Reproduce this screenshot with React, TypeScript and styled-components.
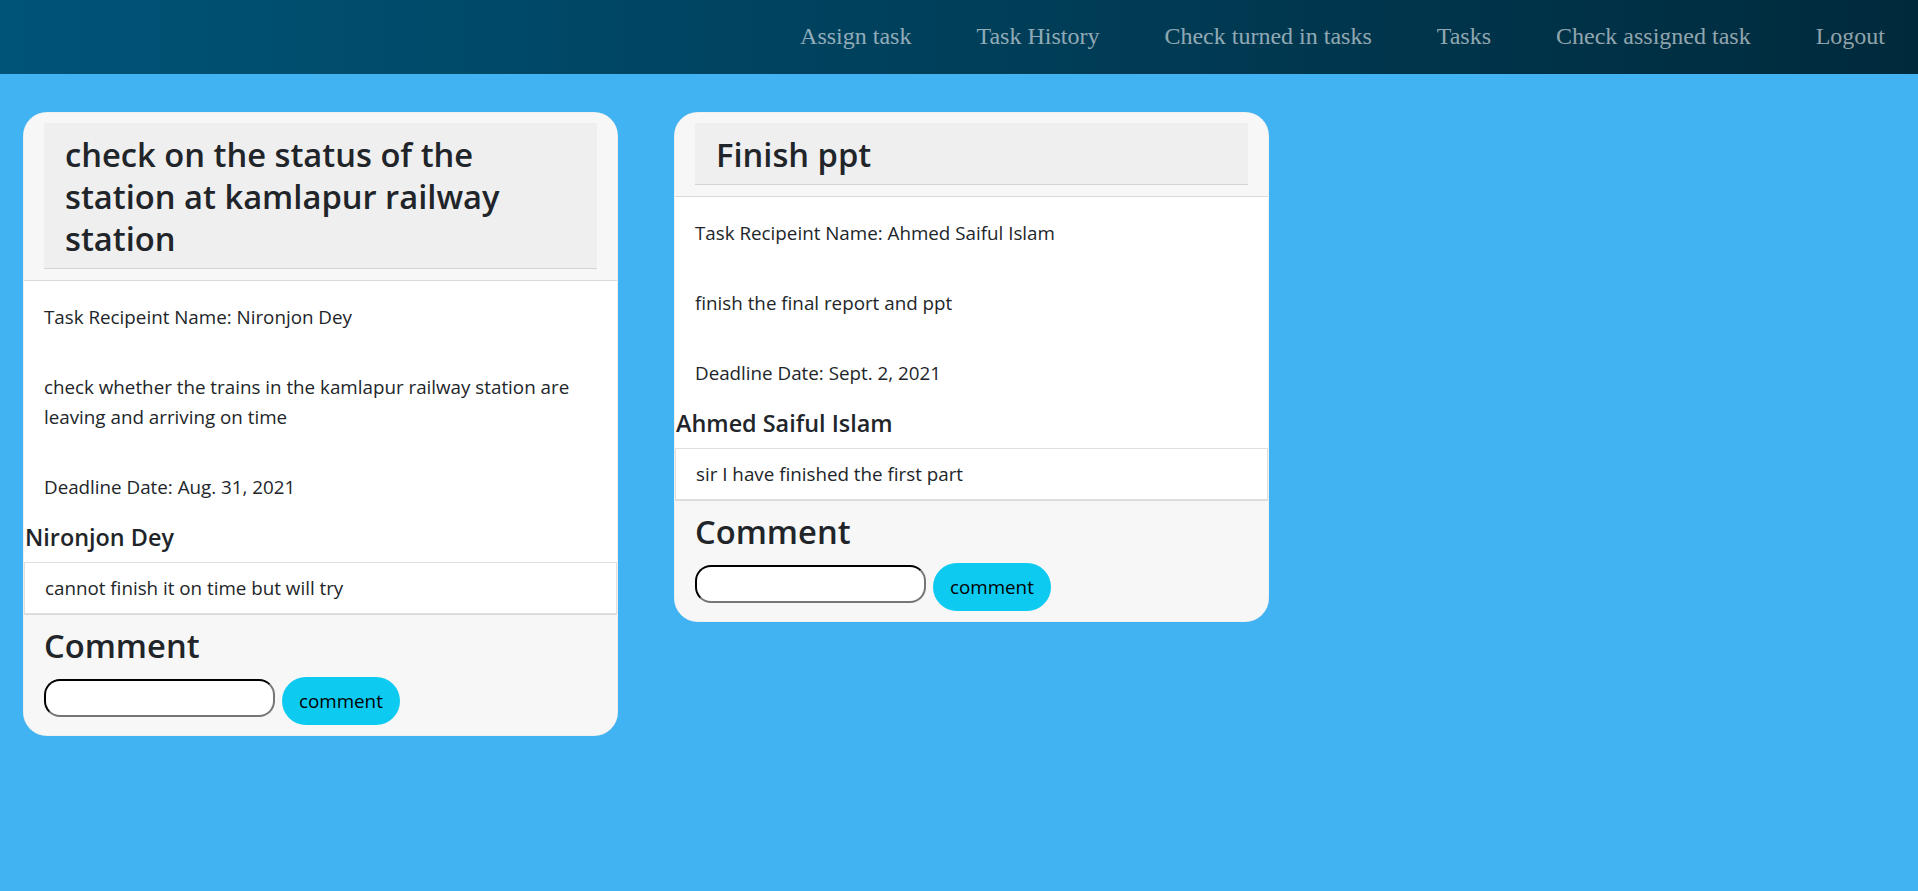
import React from 'react';
import styled, { createGlobalStyle } from 'styled-components';

const GlobalStyle = createGlobalStyle`
  html, body {
    margin: 0;
    padding: 0;
  }

  body {
    background-color: #42b3f2;
    font-family: 'Open Sans', 'Noto Sans', sans-serif;
    color: #212529;
    min-height: 891px;
  }

  * {
    box-sizing: border-box;
  }
`;

const Navbar = styled.nav`
  display: flex;
  justify-content: flex-end;
  align-items: center;
  gap: 65px;
  height: 74px;
  padding: 0 33px 2px 0;
  background: linear-gradient(to right, #005478, #002a3c);
`;

const NavLink = styled.a`
  font-family: 'Liberation Serif', 'Times New Roman', serif;
  font-size: 24px;
  line-height: 30px;
  color: rgba(255, 255, 255, 0.58);
  text-decoration: none;
  cursor: pointer;
`;

const Board = styled.main`
  display: flex;
  align-items: flex-start;
  gap: 56px;
  padding: 38px 23px;
`;

const Card = styled.section`
  width: 595px;
  background: #fff;
  border: 1px solid rgba(0, 0, 0, 0.06);
  border-radius: 24px;
  overflow: hidden;
`;

const CardHeader = styled.header`
  background: #f7f7f7;
  padding: 10px 20px 11px;
  border-bottom: 1px solid #dadada;
`;

const Title = styled.h1`
  margin: 0;
  padding: 11px 21px 8px;
  background: #efefef;
  border-bottom: 1px solid #d4d4d4;
  font-size: 32.7px;
  line-height: 42px;
  font-weight: 600;
`;

const CardBody = styled.div`
  display: flex;
  flex-direction: column;
  gap: 40px;
  padding: 21px 20px 20px;
`;

const Text = styled.p`
  margin: 0;
  font-size: 18.8px;
  line-height: 30px;
`;

const ReplyAuthor = styled.h5`
  margin: 0 0 10px;
  padding-left: 1px;
  font-size: 23.4px;
  line-height: 30px;
  font-weight: 600;
`;

const ReplyItem = styled.div`
  border: 1px solid #dfdfdf;
  padding: 10px 20px;
  font-size: 18.8px;
  line-height: 30px;
`;

const CardFooter = styled.footer`
  background: #f7f7f7;
  border-top: 1px solid #dadada;
  padding: 10px 20px;
`;

const FooterTitle = styled.h1`
  margin: 0 0 10px;
  font-size: 32.7px;
  line-height: 42px;
  font-weight: 600;
`;

const CommentForm = styled.form`
  display: flex;
  align-items: flex-start;
  gap: 7px;
`;

const CommentInput = styled.input`
  width: 231px;
  height: 38px;
  margin-top: 2px;
  border: 2px inset #767676;
  border-top-color: #1f1f1f;
  border-left-color: #1f1f1f;
  border-radius: 16px;
  background: #fff;
  padding: 0 12px;
  font-size: 18px;
`;

const CommentButton = styled.button`
  height: 48px;
  padding: 0 17px;
  border: none;
  border-radius: 24px;
  background: #0dcaf0;
  color: #000;
  font-family: 'Open Sans', 'Noto Sans', sans-serif;
  font-size: 18.8px;
  line-height: 30px;
  cursor: pointer;
`;

interface ITask {
  title: string;
  recipient: string;
  description: string;
  deadline: string;
  reply: string;
}

const tasks: ITask[] = [
  {
    title: 'check on the status of the station at kamlapur railway station',
    recipient: 'Nironjon Dey',
    description: 'check whether the trains in the kamlapur railway station are leaving and arriving on time',
    deadline: 'Aug. 31, 2021',
    reply: 'cannot finish it on time but will try',
  },
  {
    title: 'Finish ppt',
    recipient: 'Ahmed Saiful Islam',
    description: 'finish the final report and ppt',
    deadline: 'Sept. 2, 2021',
    reply: 'sir I have finished the first part',
  },
];

const navItems = [
  'Assign task',
  'Task History',
  'Check turned in tasks',
  'Tasks',
  'Check assigned task',
  'Logout',
];

const TaskCard: React.FC<{ task: ITask }> = ({ task }) => (
  <Card>
    <CardHeader>
      <Title>{task.title}</Title>
    </CardHeader>
    <CardBody>
      <Text>Task Recipeint Name: {task.recipient}</Text>
      <Text>{task.description}</Text>
      <Text>Deadline Date: {task.deadline}</Text>
    </CardBody>
    <ReplyAuthor>{task.recipient}</ReplyAuthor>
    <ReplyItem>{task.reply}</ReplyItem>
    <CardFooter>
      <FooterTitle>Comment</FooterTitle>
      <CommentForm onSubmit={(e) => e.preventDefault()}>
        <CommentInput type="text" />
        <CommentButton type="submit">comment</CommentButton>
      </CommentForm>
    </CardFooter>
  </Card>
);

export default function App() {
  return (
    <>
      <GlobalStyle />
      <Navbar>
        {navItems.map((item) => (
          <NavLink key={item}>{item}</NavLink>
        ))}
      </Navbar>
      <Board>
        {tasks.map((task) => (
          <TaskCard key={task.title} task={task} />
        ))}
      </Board>
    </>
  );
}
